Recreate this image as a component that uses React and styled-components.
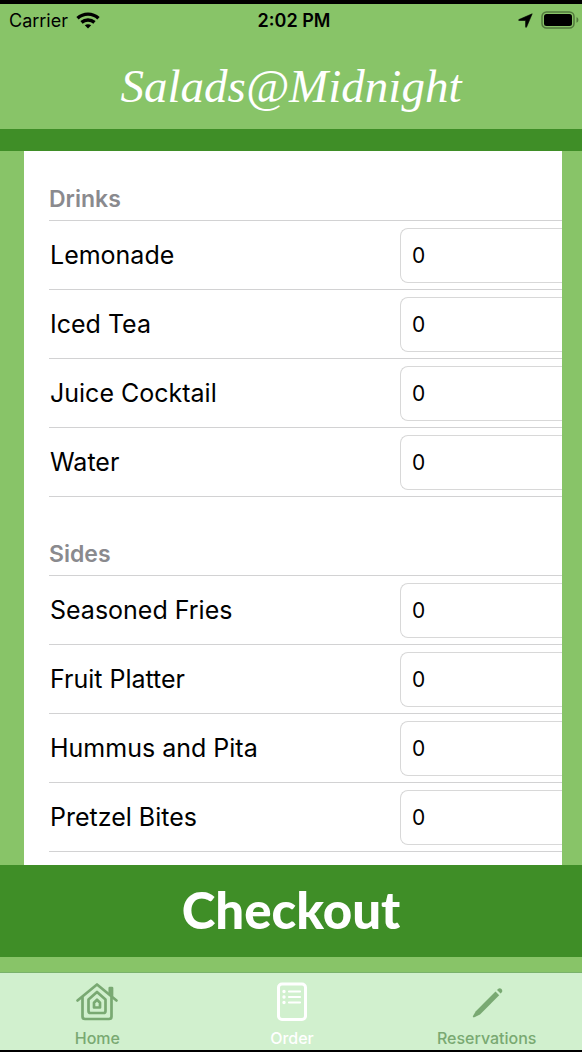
import React from "react";
import styled, { createGlobalStyle } from "styled-components";

const Global = createGlobalStyle`
  * { box-sizing: border-box; }
  body { margin: 0; background: #000; font-family: Inter, "Liberation Sans", sans-serif; }
  h1, h2, ul { margin: 0; padding: 0; }
  svg { display: block; }
`;

const Screen = styled.div`
  display: flex;
  flex-direction: column;
  height: 100vh;
  border-top: 4px solid #000;
  border-bottom: 2px solid #000;
  background: #88c468;
  color: #000;
`;

const StatusBar = styled.div`
  display: grid;
  grid-template-columns: 1fr auto 1fr;
  align-items: center;
  height: 32px;
  padding: 0 3px 0 9px;
  font-size: 18px;
`;

const StatusGroup = styled.div`
  display: flex;
  align-items: center;
  gap: 8px;
  justify-content: ${(p) => (p.$end ? "flex-end" : "flex-start")};
`;

const Clock = styled.time`
  font-size: 18px;
  font-weight: 600;
`;

const Title = styled.h1`
  flex: none;
  height: 93px;
  padding-top: 4px;
  line-height: 92px;
  text-align: center;
  color: #fff;
  font-family: "Savoye LET", "Snell Roundhand", "Liberation Serif", serif;
  font-style: italic;
  font-weight: 400;
  font-size: 47px;
`;

const Band = styled.div`
  flex: none;
  height: 22px;
  background: #3f8e27;
`;

const Menu = styled.main`
  flex: 1;
  min-height: 0;
  overflow: hidden;
  margin: 0 20px 0 24px;
  padding-left: 25px;
  background: #fff;
`;

const SectionTitle = styled.h2`
  display: flex;
  align-items: flex-end;
  height: ${(p) => (p.$first ? 70 : 79)}px;
  padding: 0 0 7px;
  border-bottom: 1px solid #d2d2d3;
  color: #8a8a8e;
  font-size: 23px;
  line-height: 28px;
  font-weight: 600;
`;

const Items = styled.ul`
  list-style: none;
`;

const Item = styled.li`
  display: flex;
  align-items: center;
  height: 69px;
  border-bottom: 1px solid #d2d2d3;
`;

const ItemName = styled.label`
  flex: 1;
  padding-left: 1px;
  font-size: 25px;
`;

const Quantity = styled.input`
  width: 162px;
  height: 55px;
  padding: 0 11px;
  border: 1px solid #d8d8d8;
  border-right: 0;
  border-radius: 8px 0 0 8px;
  background: #fff;
  color: #000;
  font: 400 21px Inter, "Liberation Sans", sans-serif;
  outline: none;
`;

const Checkout = styled.button`
  flex: none;
  height: 92px;
  padding: 0 0 3px;
  border: 0;
  background: #3f8e27;
  color: #fff;
  font: 900 51px Optima, Lato, sans-serif;
`;

const TabBar = styled.nav`
  flex: none;
  display: grid;
  grid-template-columns: repeat(3, 1fr);
  column-gap: 4px;
  height: 78px;
  margin-top: 15px;
  padding-left: 2px;
  border-top: 1px solid #79b26b;
  background: #d1f0ce;
`;

const Tab = styled.a`
  display: flex;
  flex-direction: column;
  align-items: center;
  gap: 7px;
  padding-top: 9px;
  color: ${(p) => (p.$active ? "#fff" : "#79a972")};
  font-size: 16px;
  line-height: 18px;
  font-weight: 500;
  text-decoration: none;
`;

const WifiIcon = () => (
  <svg width="24" height="17" viewBox="0 0 24 17" fill="none" stroke="#000" strokeWidth="3.4">
    <path d="M1.500 6.200C7.500.7 16.500.7 22.500 6.200" />
    <path d="M5.500 10.400c3.800-3.300 9.200-3.300 13 0" />
    <path d="M12 16.500 8.800 13.300c1.800-1.500 4.600-1.500 6.400 0z" fill="#000" stroke="none" />
  </svg>
);

const LocationIcon = () => (
  <svg width="15" height="15" viewBox="0 0 15 15">
    <path d="M14.200.8 8.600 14c-.3.6-1 .5-1-.2V7.500H1.300C.5 7.500.4 6.800 1 6.500z" fill="#000" stroke="#000" strokeWidth=".6" strokeLinejoin="round" />
  </svg>
);

const BatteryIcon = () => (
  <svg width="38" height="18" viewBox="0 0 38 18">
    <rect x="1" y="1" width="32" height="16" rx="4.500" fill="none" stroke="#527a3d" strokeWidth="1.500" />
    <rect x="3" y="3" width="28" height="12" rx="2.500" fill="#000" />
    <path d="M35.500 6.300c2.500.5 2.500 4.900 0 5.400z" fill="#527a3d" />
  </svg>
);

const HomeIcon = () => (
  <svg width="44" height="40" viewBox="0 0 44 40" fill="none" stroke="currentColor" strokeWidth="2.700" strokeLinecap="round" strokeLinejoin="round">
    <path d="M2.500 18.500 22 2.500l19.500 16" />
    <path d="M7.500 15.500v19a2.500 2.500 0 0 0 2.500 2.500h24a2.500 2.500 0 0 0 2.500-2.500v-19" />
    <path d="M34.800 6h2.200v7.500l-2.200-1.800z" fill="currentColor" />
    <path d="m22 10-8.500 7.500V29a2 2 0 0 0 2 2h13a2 2 0 0 0 2-2V17.500z" />
    <path d="m22 17.800-3 3V25.500h6v-4.700z" />
  </svg>
);

const OrderIcon = () => (
  <svg width="32" height="40" viewBox="0 0 32 40" fill="none" stroke="currentColor" strokeWidth="3" strokeLinecap="round">
    <rect x="2.500" y="2" width="27" height="35.500" rx="3.500" />
    <g strokeWidth="2.200">
      <path d="M13 9.500h11M13 15h11M13 20.500h11" />
      <path d="M8 9.500h.01M8 15h.01M8 20.500h.01" strokeWidth="3.400" />
    </g>
  </svg>
);

const PencilIcon = () => (
  <svg width="32" height="40" viewBox="0 0 32 40" fill="currentColor">
    <path d="m24.500 9.600 3.700 3.700L9 32.500 3.400 35.300c-1.200.5-1.900-.2-1.400-1.400L4.800 29.300z" />
    <path d="m26 8 1-1c2.300-2.200 5.800 1.200 3.600 3.600l-1 1z" />
  </svg>
);

const sections = [
  { title: "Drinks", items: ["Lemonade", "Iced Tea", "Juice Cocktail", "Water"] },
  { title: "Sides", items: ["Seasoned Fries", "Fruit Platter", "Hummus and Pita", "Pretzel Bites"] },
];

export default function App() {
  return (
    <>
      <Global />
      <Screen>
        <StatusBar>
          <StatusGroup>Carrier <WifiIcon /></StatusGroup>
          <Clock>2:02 PM</Clock>
          <StatusGroup $end><LocationIcon /><BatteryIcon /></StatusGroup>
        </StatusBar>
        <Title>Salads@Midnight</Title>
        <Band />
        <Menu>
          {sections.map((section, i) => (
            <section key={section.title}>
              <SectionTitle $first={i === 0}>{section.title}</SectionTitle>
              <Items>
                {section.items.map((name) => {
                  const id = name.toLowerCase().replace(/ /g, "-");
                  return (
                    <Item key={id}>
                      <ItemName htmlFor={id}>{name}</ItemName>
                      <Quantity id={id} inputMode="numeric" defaultValue="0" />
                    </Item>
                  );
                })}
              </Items>
            </section>
          ))}
        </Menu>
        <Checkout type="button">Checkout</Checkout>
        <TabBar>
          <Tab href="#home"><HomeIcon />Home</Tab>
          <Tab href="#order" $active aria-current="page"><OrderIcon />Order</Tab>
          <Tab href="#reservations"><PencilIcon />Reservations</Tab>
        </TabBar>
      </Screen>
    </>
  );
}
